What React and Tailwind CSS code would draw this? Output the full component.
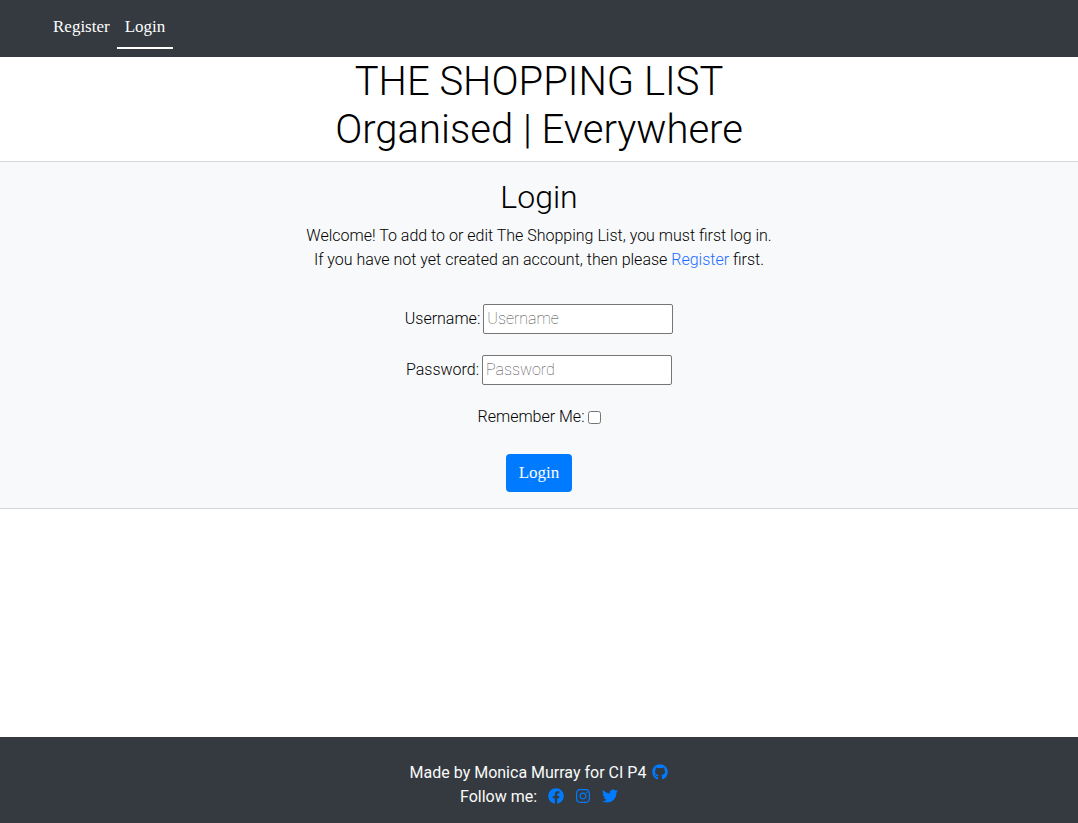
import { FaFacebook, FaGithub, FaInstagram, FaTwitter } from "react-icons/fa";

function NavBar() {
  return (
    <nav className="flex bg-[#343a40] px-[45px] py-2 font-['Liberation_Serif',serif] text-[17px] leading-6 text-white">
      <a href="#register" className="border-b-2 border-transparent pt-[7px] pr-[7px] pb-2 pl-2">
        Register
      </a>
      <a href="#login" aria-current="page" className="border-b-2 border-white px-2 pt-[7px] pb-2">
        Login
      </a>
    </nav>
  );
}

function Field({ id, label, type }) {
  return (
    <div className="flex items-center justify-center gap-[3px]">
      <label htmlFor={id}>{label}:</label>
      <input
        id={id}
        type={type}
        placeholder={label}
        className="h-[30px] w-[190px] rounded-xs border border-[#767676] bg-white px-[3px] pb-0.5 placeholder:font-thin placeholder:text-[#444444]"
      />
    </div>
  );
}

function LoginForm() {
  return (
    <form className="mt-8 flex flex-col items-center" onSubmit={(e) => e.preventDefault()}>
      <div className="flex flex-col gap-[21px]">
        <Field id="username" label="Username" type="text" />
        <Field id="password" label="Password" type="password" />
      </div>
      <div className="mt-5 flex items-center justify-center gap-[3px]">
        <label htmlFor="remember">Remember Me:</label>
        <input id="remember" type="checkbox" className="size-[13px]" />
      </div>
      <button
        type="submit"
        className="mt-[25px] h-[38px] rounded bg-[#007bff] px-[13px] font-['Liberation_Serif',serif] text-[17px] font-normal text-white"
      >
        Login
      </button>
    </form>
  );
}

function IconLink({ href, label, icon: Icon }) {
  return (
    <a href={href} aria-label={label} className="pb-0.5 text-[#007bff]">
      <Icon />
    </a>
  );
}

function Footer() {
  return (
    <footer className="mt-auto flex flex-col items-center bg-[#343a40] pt-6 pb-[14px] font-normal text-[#fafafa]">
      <p className="flex items-center gap-[6px]">
        Made by Monica Murray for CI P4
        <IconLink href="#github" label="GitHub" icon={FaGithub} />
      </p>
      <p className="flex items-center gap-[11px]">
        Follow me:
        <IconLink href="#facebook" label="Facebook" icon={FaFacebook} />
        <IconLink href="#instagram" label="Instagram" icon={FaInstagram} />
        <IconLink href="#twitter" label="Twitter" icon={FaTwitter} />
      </p>
    </footer>
  );
}

export default function App() {
  return (
    <div className="flex min-h-screen flex-col bg-white font-[Roboto,sans-serif] text-base leading-6 font-light text-black">
      <NavBar />
      <header className="pt-px pb-[7px] text-center">
        <h1 className="text-[40px] leading-12">
          THE SHOPPING LIST
          <br />
          Organised | Everywhere
        </h1>
      </header>
      <main className="border-y border-[#d6d8da] bg-[#f8f9fa] py-4 text-center">
        <h2 className="mb-2 text-[32px] leading-[38px]">Login</h2>
        <p>
          Welcome! To add to or edit The Shopping List, you must first log in.
          <br />
          If you have not yet created an account, then please{" "}
          <a href="#register" className="text-[#1a6dff]">
            Register
          </a>{" "}
          first.
        </p>
        <LoginForm />
      </main>
      <Footer />
    </div>
  );
}
